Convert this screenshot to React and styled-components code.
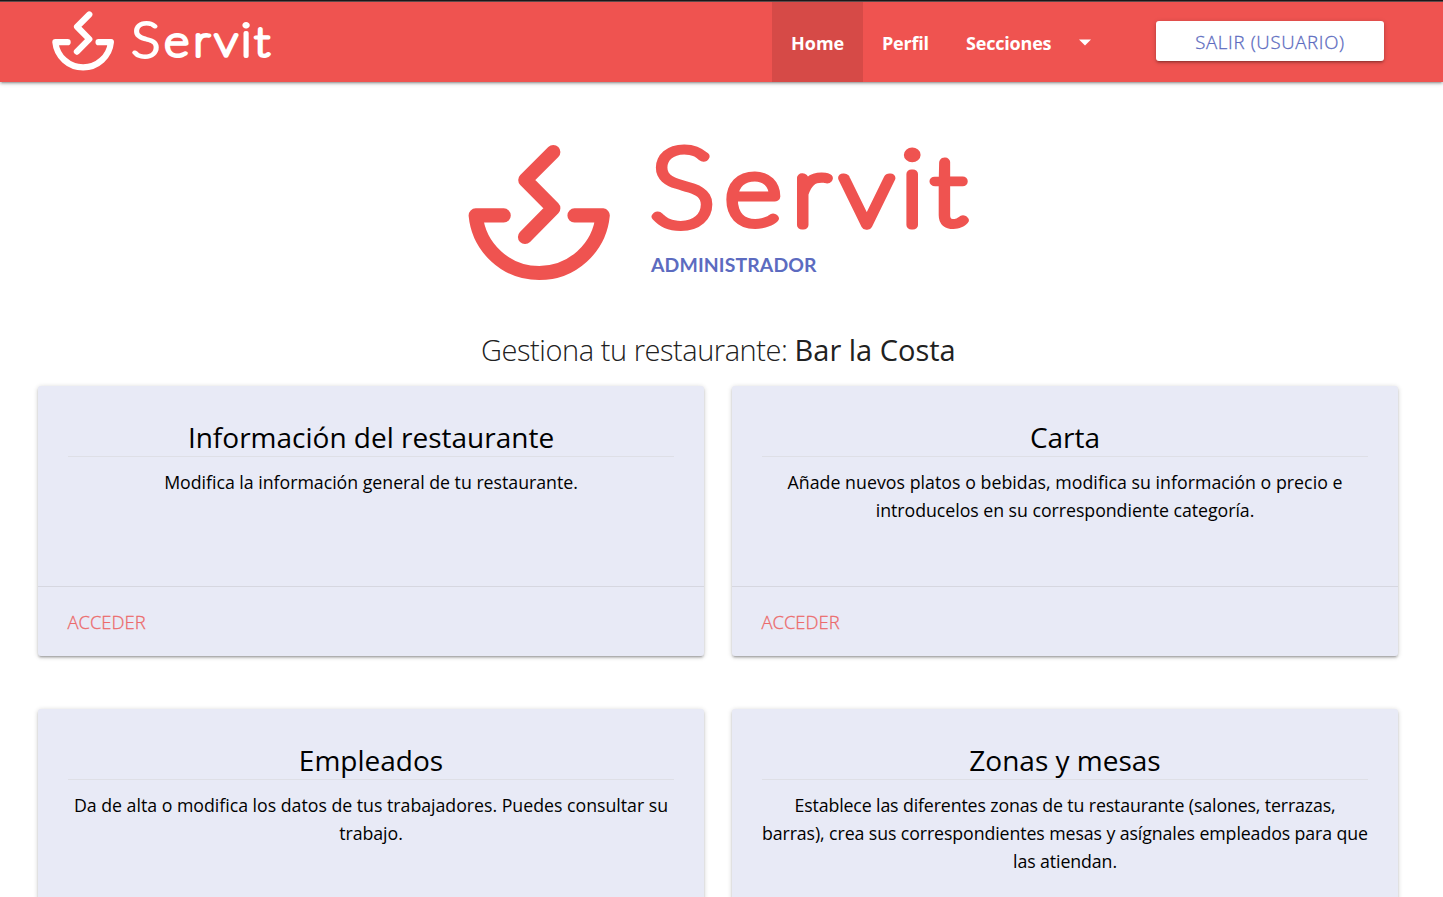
import React from 'react';
import styled, { createGlobalStyle } from 'styled-components';

const RED = '#ef5350';
const INDIGO = '#5c6bc0';
const SHADOW =
  '0 2px 2px 0 rgba(0,0,0,0.14), 0 3px 1px -2px rgba(0,0,0,0.12), 0 1px 5px 0 rgba(0,0,0,0.2)';

const GlobalStyle = createGlobalStyle`
  * { box-sizing: border-box; }
  html, body { margin: 0; height: 100%; overflow: hidden; background: #fff; }
  body { font-family: "Open Sans", "Noto Sans", sans-serif; color: #000; }
`;

const Page = styled.div`
  height: 897px;
  overflow: hidden;
  display: flex;
  flex-direction: column;
`;

const Header = styled.header`
  flex: none;
  height: 82px;
  padding: 1px 59px 0 52px;
  border-top: 1px solid #1c1819;
  background: linear-gradient(#5e4a4b 1px, ${RED} 1px);
  box-shadow: ${SHADOW};
  display: flex;
  justify-content: space-between;
  align-items: stretch;
`;

const Brand = styled.a`
  padding-top: 9px;
  display: flex;
  align-items: flex-start;
`;

const Nav = styled.nav`
  display: flex;
`;

const NavLink = styled.a`
  display: flex;
  align-items: center;
  height: 80px;
  padding: 1px 19px 0;
  width: ${(p) => p.$width}px;
  color: #fff;
  font-size: 18px;
  font-weight: 700;
  letter-spacing: ${(p) => p.$spacing || 0}px;
  white-space: nowrap;
  background: ${(p) => (p.$active ? 'rgba(0,0,0,0.1)' : 'transparent')};
`;

const Caret = styled.svg`
  margin-left: auto;
  flex: none;
`;

const LogoutButton = styled.button`
  margin: 19px 0 0 46px;
  width: 228px;
  height: 40px;
  padding: 0;
  border: 0;
  border-radius: 3px;
  background: #fff;
  color: ${INDIGO};
  box-shadow: ${SHADOW};
  font: 300 18.6px/42px "Open Sans", sans-serif;
  letter-spacing: 0.67px;
  -webkit-text-stroke: 0.3px ${INDIGO};
`;

const Hero = styled.section`
  flex: none;
  height: 190px;
  padding: 62px 0 0 468px;
`;

const LogoSvg = styled.svg`
  display: block;
  overflow: visible;
`;

const Heading = styled.h1`
  flex: none;
  height: 114px;
  margin: 0;
  padding: 55px 0 0 481px;
  font-size: 29px;
  line-height: 46px;
  font-weight: 300;
  letter-spacing: -0.45px;
  white-space: nowrap;
  color: #212121;
`;

const RestaurantName = styled.span`
  font-weight: 400;
  letter-spacing: 0;
`;

const Grid = styled.main`
  flex: none;
  padding: 0 45px 0 38px;
  display: grid;
  grid-template-columns: 666px 666px;
  column-gap: 28px;
  row-gap: 53px;
`;

const Card = styled.article`
  height: 270px;
  display: flex;
  flex-direction: column;
  border-radius: 3px;
  background: #e8eaf6;
  box-shadow: ${SHADOW};
`;

const CardBody = styled.div`
  flex: 1;
  padding: 30px 30px 0;
`;

const CardTitle = styled.h2`
  margin: 0 0 11px;
  height: 41px;
  border-bottom: 1px solid #dedfe6;
  font-size: 28px;
  line-height: 42px;
  font-weight: 400;
  text-align: center;
`;

const Line = styled.span`
  display: block;
  font-size: 17.75px;
  line-height: 28px;
  letter-spacing: ${(p) => p.$spacing}px;
  text-align: center;
  white-space: nowrap;
`;

const CardAction = styled.div`
  height: 70px;
  padding: 0 29.5px;
  border-top: 1px solid rgba(160, 160, 160, 0.25);
`;

const ActionLink = styled.a`
  font-size: 18.4px;
  line-height: 70px;
  font-weight: 300;
  color: #ec6a6b;
  -webkit-text-stroke: 0.3px #ec6a6b;
`;

const STRETCH = 1.13;

// [glyph, left edge of its ink, font size, side bearing, baseline shift]
const letters = [
  ['S', 188, 109, 5.2, 1],
  ['e', 262.3, 97, 5, -1],
  ['r', 333, 97, 8, 0],
  ['v', 373.3, 96, 1, 0],
  ['i', 443.4, 104, 10, 0],
  ['t', 465.5, 93, 2, -1],
];

function Logo({ color, width, caption, wordOffset = 0 }) {
  return (
    <LogoSvg width={width} height={(width * 136) / 500} viewBox="0 0 500 136">
      <g fill="none" stroke={color} strokeWidth="14.2" strokeLinecap="round" strokeLinejoin="round">
        <path d="M85.3 8 57.3 36l28 28.3L57 93" />
        <path d="M35.7 71.4H7.7a63.8 63.8 0 0 0 127 0H106.5" />
      </g>
      <g transform={`translate(0 ${wordOffset}) scale(${STRETCH} 1)`}>
        <text
          y="81"
          fontFamily="Lato, sans-serif"
          fontWeight="100"
          fill={color}
          stroke={color}
          strokeWidth="9"
          strokeLinejoin="round"
          strokeLinecap="round"
        >
          {letters.map(([ch, x, size, bearing, shift]) => (
            <tspan key={ch} x={x / STRETCH - bearing} y={81 + shift} fontSize={size}>
              {ch}
            </tspan>
          ))}
        </text>
      </g>
      {caption && (
        <text
          x="183"
          y="127.7"
          fontFamily="Lato, sans-serif"
          fontWeight="700"
          fontSize="19.4"
          fill={INDIGO}
          textLength="165.5"
        >
          {caption}
        </text>
      )}
    </LogoSvg>
  );
}

const cards = [
  {
    title: 'Información del restaurante',
    lines: [['Modifica la información general de tu restaurante.', -0.02]],
  },
  {
    title: 'Carta',
    lines: [
      ['Añade nuevos platos o bebidas, modifica su información o precio e', 0.03],
      ['introducelos en su correspondiente categoría.', -0.04],
    ],
  },
  {
    title: 'Empleados',
    lines: [
      ['Da de alta o modifica los datos de tus trabajadores. Puedes consultar su', -0.02],
      ['trabajo.', -0.05],
    ],
  },
  {
    title: 'Zonas y mesas',
    lines: [
      ['Establece las diferentes zonas de tu restaurante (salones, terrazas,', -0.13],
      ['barras), crea sus correspondientes mesas y asígnales empleados para que', -0.1],
      ['las atiendan.', -0.1],
    ],
  },
];

export default function App() {
  return (
    <Page>
      <GlobalStyle />
      <Header>
        <Brand>
          <Logo color="#fff" width={218.5} wordOffset={22.5} />
        </Brand>
        <Nav>
          <NavLink $active $width={91}>Home</NavLink>
          <NavLink $width={84} $spacing={-0.2}>Perfil</NavLink>
          <NavLink $width={163} $spacing={-0.2}>
            Secciones
            <Caret width="12" height="7" viewBox="0 0 12 7">
              <path d="M0 .5h12L6 6.5z" fill="#fff" />
            </Caret>
          </NavLink>
          <LogoutButton>SALIR (USUARIO)</LogoutButton>
        </Nav>
      </Header>
      <Hero>
        <Logo color={RED} width={500} caption="ADMINISTRADOR" />
      </Hero>
      <Heading>
        Gestiona tu restaurante: <RestaurantName>Bar la Costa</RestaurantName>
      </Heading>
      <Grid>
        {cards.map((card) => (
          <Card key={card.title}>
            <CardBody>
              <CardTitle>{card.title}</CardTitle>
              {card.lines.map(([text, spacing]) => (
                <Line key={text} $spacing={spacing}>{text}</Line>
              ))}
            </CardBody>
            <CardAction>
              <ActionLink>ACCEDER</ActionLink>
            </CardAction>
          </Card>
        ))}
      </Grid>
    </Page>
  );
}
